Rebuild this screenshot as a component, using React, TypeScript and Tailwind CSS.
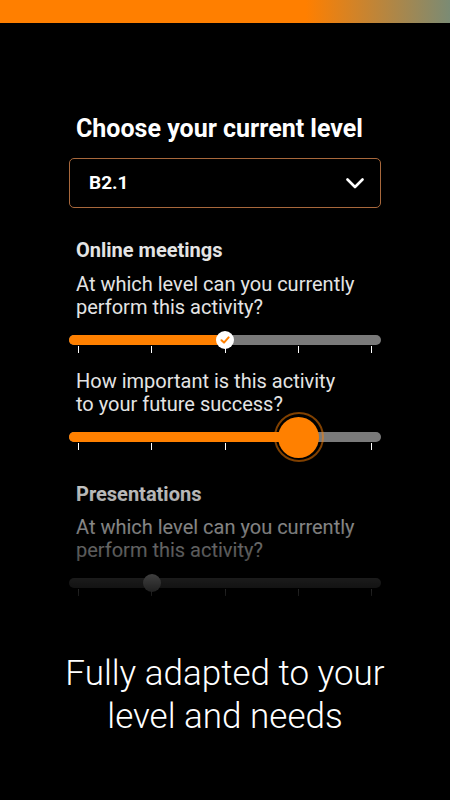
type SliderProps = {
  value: number; // 0..4 step index
  variant: 'check' | 'big' | 'plain';
  fill?: boolean;
};

function LevelSlider({ value, variant, fill = true }: SliderProps) {
  // ticks sit 9px in from each end of the track
  const thumbLeft = `calc(9px + (100% - 18px) * ${value / 4})`;

  return (
    <div className="relative flex w-full flex-col gap-px pt-[7px]">
      <div className="flex h-[10px] w-full rounded-full bg-[#7a7a7a]">
        {fill && <div className="h-full rounded-full bg-[#ff8000]" style={{ width: thumbLeft }} />}
      </div>
      <div className="flex justify-between px-[9px]">
        {[0, 1, 2, 3, 4].map(i => (
          <span key={i} className="block h-[7px] w-px bg-white" />
        ))}
      </div>

      {variant === 'check' && (
        <div
          className="absolute top-[3px] flex h-[18px] w-[18px] -translate-x-1/2 items-center justify-center rounded-full bg-white"
          style={{ left: thumbLeft }}
        >
          <svg width="10" height="10" viewBox="0 0 10 10" fill="none">
            <path d="M1.5 5.3 L4 7.6 L8.6 2.4" stroke="#ff8000" strokeWidth="2" strokeLinecap="round" strokeLinejoin="round" />
          </svg>
        </div>
      )}
      {variant === 'plain' && (
        <div
          className="absolute top-[3px] h-[18px] w-[18px] -translate-x-1/2 rounded-full bg-white"
          style={{ left: thumbLeft }}
        />
      )}
      {variant === 'big' && (
        <div
          className="absolute top-[-13px] flex h-[50px] w-[50px] -translate-x-1/2 items-center justify-center rounded-full border-2 border-[#ff8000]/50"
          style={{ left: thumbLeft }}
        >
          <div className="h-[41px] w-[41px] rounded-full bg-[#ff8000]" />
        </div>
      )}
    </div>
  );
}

function Question({ children }: { children: React.ReactNode }) {
  return <p className="pl-[7px] text-[20px] leading-[23px] text-[#e4e4e4]">{children}</p>;
}

function ActivityTitle({ children }: { children: React.ReactNode }) {
  return <h2 className="pl-[7px] text-[20px] font-bold leading-[24px] text-[#e4e4e4]">{children}</h2>;
}

export default function App() {
  return (
    <div className="flex min-h-[800px] w-full flex-col overflow-hidden bg-black font-['Roboto',sans-serif] text-white">
      <div className="h-[23px] w-full bg-[linear-gradient(90deg,#ff7f00_68%,#7b8b74_100%)]" />

      <div className="mx-auto flex w-[312px] flex-col pt-[92px]">
        <div className="flex flex-col gap-[15px]">
          <h1 className="pl-[7px] text-[25px] font-bold leading-[28px] text-white">Choose your current level</h1>
          <button className="flex h-[50px] w-full items-center justify-between rounded-[5px] border border-[#a8683c] pl-[19px] pr-[16px]">
            <span className="text-[19px] font-bold text-white">B2.1</span>
            <svg width="18" height="11" viewBox="0 0 18 11" fill="none">
              <path d="M1.5 1.5 L9 9 L16.5 1.5" stroke="white" strokeWidth="2.6" strokeLinecap="round" strokeLinejoin="round" />
            </svg>
          </button>
        </div>

        <div className="mt-[30px] flex flex-col gap-[11px]">
          <ActivityTitle>Online meetings</ActivityTitle>
          <div className="flex flex-col gap-[9px]">
            <Question>
              At which level can you currently
              <br />
              perform this activity?
            </Question>
            <LevelSlider value={2} variant="check" />
          </div>
          <div className="mt-[6px] flex flex-col gap-[9px]">
            <Question>
              How important is this activity
              <br />
              to your future success?
            </Question>
            <LevelSlider value={3} variant="big" />
          </div>
        </div>

        <div className="relative mt-[32px] flex flex-col gap-[10px]">
          <ActivityTitle>Presentations</ActivityTitle>
          <div className="flex flex-col gap-[9px]">
            <Question>
              At which level can you currently
              <br />
              perform this activity?
            </Question>
            <LevelSlider value={1} variant="plain" fill={false} />
          </div>
          {/* fade-out over the next card */}
          <div className="pointer-events-none absolute inset-x-[-20px] top-[-17px] h-[145px] bg-[linear-gradient(180deg,rgba(0,0,0,0)_0%,#000_100%)]" />
        </div>
      </div>

      <p className="mt-[56px] text-center text-[35px] font-light leading-[43px] text-white">
        Fully adapted to your
        <br />
        level and needs
      </p>
    </div>
  );
}
